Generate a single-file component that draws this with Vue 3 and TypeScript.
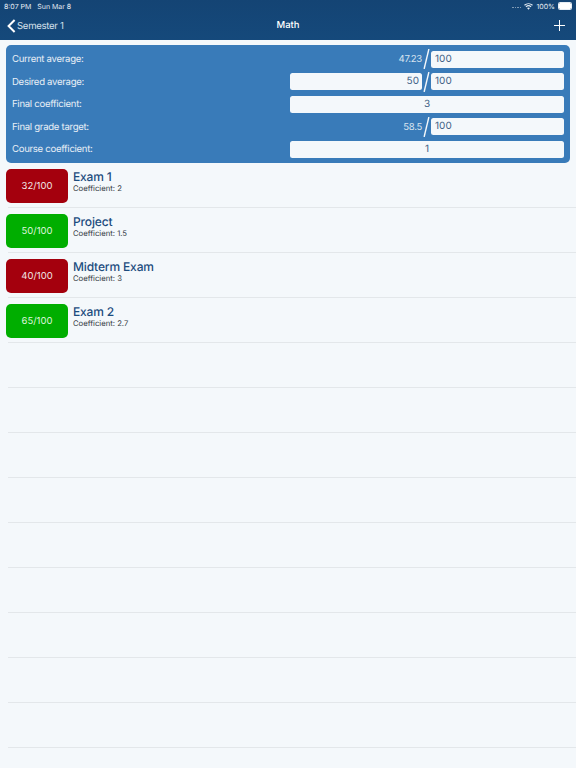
<script setup lang="ts">
// Course detail screen: averages panel on top, list of graded items below.
interface Field {
  label: string
  left?: string
  leftIsInput?: boolean
  right?: string
  full?: string
}
interface Grade {
  title: string
  score: string
  coef: string
  pass: boolean
}

const fields: Field[] = [
  { label: 'Current average:', left: '47.23', right: '100' },
  { label: 'Desired average:', left: '50', leftIsInput: true, right: '100' },
  { label: 'Final coefficient:', full: '3' },
  { label: 'Final grade target:', left: '58.5', right: '100' },
  { label: 'Course coefficient:', full: '1' },
]

const grades: Grade[] = [
  { title: 'Exam 1', score: '32/100', coef: '2', pass: false },
  { title: 'Project', score: '50/100', coef: '1.5', pass: true },
  { title: 'Midterm Exam', score: '40/100', coef: '3', pass: false },
  { title: 'Exam 2', score: '65/100', coef: '2.7', pass: true },
]

const emptyRows = 9
</script>

<template>
  <div class="screen">
    <header class="bar">
      <div class="status">
        <span>8:07 PM&nbsp;&nbsp; Sun Mar 8</span>
        <div class="status-right">
          <span class="dots"><i v-for="n in 4" :key="n"></i></span>
          <svg width="9" height="7" viewBox="0 0 11 8">
            <path d="M5.5 8 3.7 5.9a2.7 2.7 0 0 1 3.6 0zM2.8 4.9 1.9 3.9a5.3 5.3 0 0 1 7.2 0l-.9 1a4 4 0 0 0-5.4 0zM1.1 3 .1 2a8 8 0 0 1 10.8 0l-1 1a6.6 6.6 0 0 0-8.8 0z" fill="#e6edf4" />
          </svg>
          <span>100%</span>
          <span class="battery"><b></b></span>
        </div>
      </div>
      <nav class="nav">
        <div class="back">
          <svg width="9" height="14" viewBox="0 0 9 14">
            <path d="M7.6 1 1.6 7l6 6" fill="none" stroke="#fff" stroke-width="2" />
          </svg>
          <span>Semester 1</span>
        </div>
        <div class="title">Math</div>
        <svg class="plus" width="11" height="11" viewBox="0 0 11 11">
          <path d="M5.5 0v11M0 5.5h11" stroke="#fff" stroke-width="1" />
        </svg>
      </nav>
    </header>

    <section class="panel">
      <div v-for="f in fields" :key="f.label" class="field">
        <span class="label">{{ f.label }}</span>
        <div v-if="f.full" class="input center">{{ f.full }}</div>
        <div v-else class="pair">
          <div v-if="f.leftIsInput" class="input end">{{ f.left }}</div>
          <div v-else class="static">{{ f.left }}</div>
          <svg class="slash" width="7" height="20" viewBox="0 0 7 20">
            <path d="M5.9 0 1.1 20" stroke="#f4f8fb" stroke-width="1.4" />
          </svg>
          <div class="input">{{ f.right }}</div>
        </div>
      </div>
    </section>

    <ul class="list">
      <li v-for="g in grades" :key="g.title" class="row">
        <div class="badge" :class="g.pass ? 'pass' : 'fail'">{{ g.score }}</div>
        <div class="info">
          <div class="name">{{ g.title }}</div>
          <div class="coef">Coefficient: {{ g.coef }}</div>
        </div>
      </li>
      <li v-for="n in emptyRows" :key="'empty' + n" class="row"></li>
    </ul>
  </div>
</template>

<style>
html,
body {
  margin: 0;
  background: #f4f8fb;
}
</style>

<style scoped>
.screen {
  width: 576px;
  height: 768px;
  overflow: hidden;
  background: #f4f8fb;
  font-family: Inter, "Liberation Sans", sans-serif;
  text-rendering: geometricPrecision;
}
.bar {
  height: 40px;
  background: linear-gradient(#144474, #15497b);
  color: #fff;
}
.status {
  height: 12px;
  padding: 0 4px;
  display: flex;
  justify-content: space-between;
  align-items: center;
  font-size: 7px;
  color: #e6edf4;
}
.status-right {
  display: flex;
  align-items: center;
  gap: 3px;
}
.dots {
  display: flex;
  gap: 1px;
}
.dots i {
  width: 1.5px;
  height: 1.5px;
  margin-top: 3px;
  background: #7f9ab5;
}
.battery {
  width: 12px;
  height: 6px;
  border: 0.5px solid #e6edf4;
  border-radius: 1.5px;
  display: flex;
}
.battery b {
  flex: 1;
  background: #fff;
  border-radius: 1px;
}
.nav {
  height: 27px;
  padding: 0 11px 0 7px;
  display: flex;
  align-items: center;
  position: relative;
}
.back {
  display: flex;
  align-items: center;
  gap: 1px;
  font-size: 9.6px;
  letter-spacing: -0.3px;
  color: #d5e0eb;
}
.back span {
  padding-top: 1px;
}
.title {
  position: absolute;
  left: 0;
  right: 0;
  text-align: center;
  font-size: 9.5px;
  font-weight: 500;
}
.plus {
  margin-left: auto;
}
.panel {
  margin: 5px 6px 0;
  height: 118px;
  box-sizing: border-box;
  padding: 3px 6px;
  background: #397bb9;
  border-radius: 5px;
  display: flex;
  flex-direction: column;
}
.field {
  height: 22.5px;
  flex: none;
  display: flex;
  align-items: center;
  justify-content: space-between;
  font-size: 9.6px;
  letter-spacing: -0.3px;
  color: #e8eff6;
}
.label {
  padding-top: 1px;
}
.pair {
  width: 274px;
  display: flex;
  align-items: center;
}
.static {
  width: 132px;
  padding-top: 1px;
  text-align: right;
  color: #d5e2ef;
  font-size: 9.6px;
  box-sizing: border-box;
}
.slash {
  flex: none;
  margin: 0 1px;
}
.input {
  flex: 1;
  height: 16.7px;
  line-height: 17px;
  box-sizing: border-box;
  padding: 0 4px;
  background: #f4f8fb;
  border-radius: 2.5px;
  color: #3d5f85;
  font-size: 10px;
  letter-spacing: 0;
}
.field > .input {
  flex: none;
  width: 274px;
}
.input.center {
  text-align: center;
}
.input.end {
  flex: none;
  width: 132px;
  text-align: right;
  padding-right: 3px;
}
.list {
  list-style: none;
  margin: 0;
  padding: 0;
}
.row {
  height: 45px;
  box-sizing: border-box;
  padding: 6px 0 0 6px;
  display: flex;
  align-items: flex-start;
  gap: 5px;
  position: relative;
}
.row::after {
  content: "";
  position: absolute;
  left: 8px;
  right: 0;
  bottom: 0;
  height: 1px;
  background: #e3e7ea;
}
.badge {
  width: 62px;
  height: 34px;
  border-radius: 5px;
  display: flex;
  align-items: center;
  justify-content: center;
  font-size: 9.5px;
  color: #f0e6e6;
}
.fail {
  background: #a4000d;
}
.pass {
  background: #00ae00;
  color: #def5de;
}
.info {
  padding-top: 1px;
}
.name {
  font-size: 12px;
  line-height: 14px;
  font-weight: 500;
  letter-spacing: -0.15px;
  color: #1c4c7e;
}
.coef {
  font-size: 7.7px;
  line-height: 10px;
  color: #33393f;
}
</style>
